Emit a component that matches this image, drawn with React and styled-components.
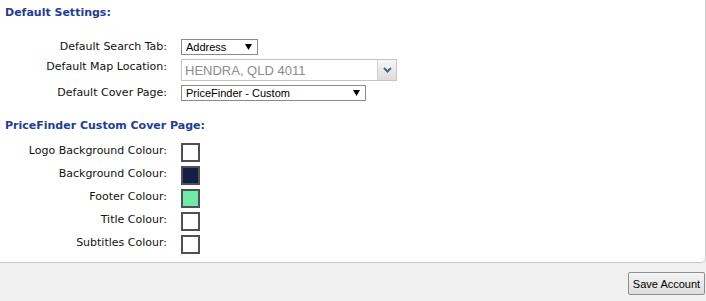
import React from "react";
import styled, { createGlobalStyle } from "styled-components";

const GlobalStyle = createGlobalStyle`
  html, body { margin: 0; padding: 0; }
  body {
    background: #f0f0f0;
    font-family: "DejaVu Sans", Verdana, sans-serif;
    width: 706px;
    height: 301px;
    overflow: hidden;
  }
`;

const Page = styled.div`
  display: flex;
  flex-direction: column;
  width: 706px;
`;

const Panel = styled.div`
  box-sizing: border-box;
  width: 706px;
  height: 263px;
  background: #fff;
  border-right: 1px solid #c9c9c9;
  border-bottom: 1px solid #c9c9c9;
  border-bottom-right-radius: 5px;
  display: flex;
  flex-direction: column;
`;

const Heading = styled.h3`
  margin: ${(p) => p.$top}px 0 0 5px;
  font-family: "DejaVu Sans", Verdana, sans-serif;
  font-weight: bold;
  font-size: 11px;
  line-height: 13px;
  color: #1f3c95;
`;

const FieldList = styled.div`
  display: flex;
  flex-direction: column;
  gap: 4px;
  margin-top: ${(p) => p.$top}px;
`;

const Row = styled.div`
  display: flex;
  align-items: flex-start;
  gap: 14px;
`;

const Label = styled.label`
  width: 167px;
  flex: none;
  text-align: right;
  font-size: 11px;
  line-height: 14px;
  padding-top: 1px;
  color: #111;
  white-space: nowrap;
`;

const Select = styled.div`
  box-sizing: border-box;
  width: ${(p) => p.$width}px;
  height: 16px;
  border: 1px solid #8a8a8a;
  background: #fff;
  display: flex;
  align-items: center;
  justify-content: space-between;
  padding: 0 5px 0 4px;
  font-family: "Liberation Sans", Arial, sans-serif;
  font-size: 11px;
  color: #000;
`;

const Combo = styled.div`
  box-sizing: border-box;
  width: 216px;
  height: 22px;
  border: 1px solid #c4c4c4;
  background: #fff;
  display: flex;
  align-items: stretch;
`;

const ComboText = styled.div`
  flex: 1;
  display: flex;
  align-items: center;
  padding-left: 3px;
  font-family: "Liberation Sans", Arial, sans-serif;
  font-size: 13px;
  color: #8c8c8c;
`;

const ComboButton = styled.div`
  width: 18px;
  border-left: 1px solid #d0d0d0;
  background: linear-gradient(#f7f7f7, #dcdcdc);
  display: flex;
  align-items: center;
  justify-content: center;
`;

const Swatch = styled.div`
  box-sizing: border-box;
  width: 19px;
  height: 19px;
  border: 2px solid #505050;
  background: ${(p) => p.$color};
`;

const Footer = styled.div`
  display: flex;
  justify-content: flex-end;
  padding: 9px 1px 0 0;
`;

const Button = styled.button`
  box-sizing: border-box;
  width: 77px;
  height: 23px;
  padding: 0;
  border: 1px solid #8e8e8e;
  border-radius: 2px;
  background: linear-gradient(#f5f5f5, #dddddd);
  font-family: "Liberation Sans", Arial, sans-serif;
  font-size: 11px;
  color: #000;
`;

const Triangle = () => (
  <svg width="7" height="6" viewBox="0 0 7 6">
    <polygon points="0,0 7,0 3.5,6" fill="#000" />
  </svg>
);

const Chevron = () => (
  <svg width="9" height="6" viewBox="0 0 9 6">
    <path d="M1 1 L4.5 4.5 L8 1" fill="none" stroke="#45638f" strokeWidth="2" />
  </svg>
);

const colours = [
  ["Logo Background Colour:", "#ffffff"],
  ["Background Colour:", "#141e46"],
  ["Footer Colour:", "#6eeaa9"],
  ["Title Colour:", "#ffffff"],
  ["Subtitles Colour:", "#ffffff"],
];

export default function App() {
  return (
    <>
      <GlobalStyle />
      <Page>
        <Panel>
          <Heading $top={6}>Default Settings:</Heading>
          <FieldList $top={20}>
            <Row>
              <Label>Default Search Tab:</Label>
              <Select $width={77}>
                <span>Address</span>
                <Triangle />
              </Select>
            </Row>
            <Row>
              <Label>Default Map Location:</Label>
              <Combo>
                <ComboText>HENDRA, QLD 4011</ComboText>
                <ComboButton>
                  <Chevron />
                </ComboButton>
              </Combo>
            </Row>
            <Row>
              <Label>Default Cover Page:</Label>
              <Select $width={185}>
                <span>PriceFinder - Custom</span>
                <Triangle />
              </Select>
            </Row>
          </FieldList>
          <Heading $top={18}>PriceFinder Custom Cover Page:</Heading>
          <FieldList $top={11}>
            {colours.map(([label, color]) => (
              <Row key={label}>
                <Label>{label}</Label>
                <Swatch $color={color} />
              </Row>
            ))}
          </FieldList>
        </Panel>
        <Footer>
          <Button>Save Account</Button>
        </Footer>
      </Page>
    </>
  );
}
